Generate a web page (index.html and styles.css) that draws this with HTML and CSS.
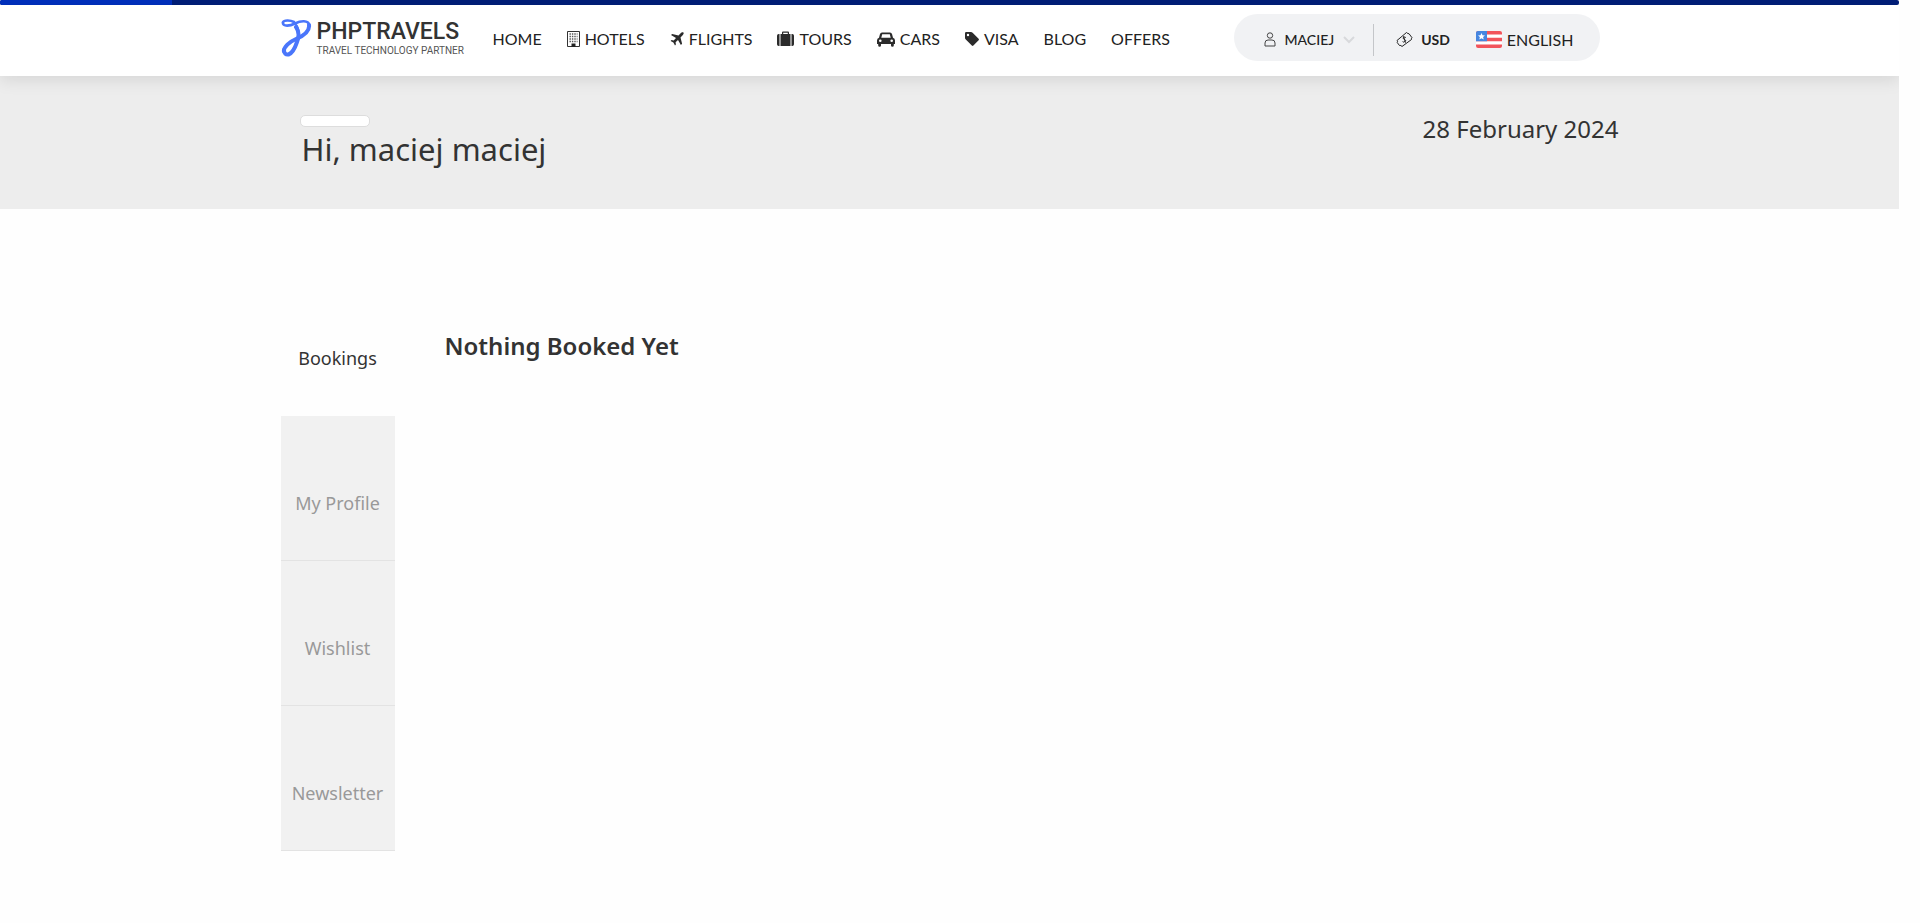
FILE: index.html
```html
<!DOCTYPE html>
<html lang="en">
<head>
<meta charset="utf-8">
<title>PHPTRAVELS - Bookings</title>
<link rel="stylesheet" href="styles.css">
</head>
<body>
<div class="progress"><div class="progress-value"></div></div>
<header class="header">
  <div class="container header-row">
    <a class="logo" href="#">
      <svg class="logo-mark" viewBox="0 0 31 38" fill="none" stroke="#4a76fb" stroke-linecap="round" stroke-linejoin="round">
        <path stroke-width="2.600" d="M13 3C9 1 3 1 1.800 3.500C2 8 9 7 14 4.500C20 1.500 27 1 28.500 6"/>
        <path stroke-width="4" d="M28 6C29 13 22 17 15 20C8 23 3 28 2.800 32"/>
        <path stroke-width="4" d="M15 8C18 12 18 18 16 23C14 29 12 34 7.500 35.500C5 36 3 34.500 3 31"/>
        <path stroke-width="2" d="M13 4.500C16 6 17 9 17 11"/>
      </svg>
      <span class="logo-text"><span class="logo-name">PHPTRAVELS</span><span class="logo-tag">TRAVEL TECHNOLOGY PARTNER</span></span>
    </a>
    <nav class="nav">
      <a href="#">HOME</a>
      <a href="#"><svg width="13" height="16" viewBox="0 0 13 16"><path fill="none" stroke="#333" d="M.5.5h12v15H.5z"/><path stroke="#555" stroke-width="1.4" stroke-dasharray="1.4 1" d="M2.5 3h8M2.5 5.5h8M2.5 8h8M2.5 10.500h8"/><path fill="#222" d="M4.500 12.500h4V16h-4z"/></svg>HOTELS</a>
      <a href="#"><svg width="14" height="14" viewBox="0 0 14 14"><path fill="#2b2b2b" d="M13.400.6c.7.8 0 2-1 3L10.500 5.500l1.600 6.300-1.200 1.200L8 8 5.600 10.300l.3 2.200-.9.900-1.600-2.800L.6 9l.9-.9 2.200.3L6 6 1 3.100l1.200-1.200 6.300 1.600L10.400 1.600c1-1 2.200-1.700 3-1z"/></svg>FLIGHTS</a>
      <a href="#"><svg width="17" height="16" viewBox="0 0 17 16"><path fill="#2b2b2b" fill-rule="evenodd" d="M2.500 3v12h-.8Q0 15 0 13.300V4.700Q0 3 1.700 3zM14.500 3h.8Q17 3 17 4.700v8.600q0 1.700-1.700 1.700h-.8zM3.500 3H5V1.500Q5 .5 6 .5h5q1 0 1 1V3h1.500v12h-10zm2.700 0h4.600V1.700H6.200z"/></svg>TOURS</a>
      <a href="#"><svg width="18" height="15" viewBox="0 0 18 15"><path fill="#2b2b2b" fill-rule="evenodd" d="M5 .5h8q1.500 0 2 1.500l1 3.800Q18 6.500 18 8.500V12h-1.200v1.500q0 1.300-1.400 1.300T14 13.500V12H4v1.500q0 1.300-1.400 1.300t-1.400-1.300V12H0V8.500q0-2 2-2.700L3 2Q3.500.5 5 .5zm.2 1.800L4.300 5.700h9.400l-.9-3.400zM3.300 7.500a1.300 1.300 0 1 0 0 2.600 1.300 1.300 0 0 0 0-2.600zm11.400 0a1.300 1.300 0 1 0 0 2.600 1.300 1.300 0 0 0 0-2.600z"/></svg>CARS</a>
      <a href="#"><svg width="14" height="14" viewBox="0 0 14 14"><path fill="#2b2b2b" fill-rule="evenodd" d="M0 1.200Q0 0 1.200 0H6q.8 0 1.600.7l6 6q.7.8 0 1.600l-5.200 5.300q-.8.700-1.600 0l-6-6Q0 6.800 0 6zM3 1.800a1.200 1.200 0 1 0 0 2.400 1.200 1.200 0 0 0 0-2.400z"/></svg>VISA</a>
      <a href="#">BLOG</a>
      <a href="#">OFFERS</a>
    </nav>
    <div class="tools">
      <button class="account" type="button"><svg width="12" height="15" viewBox="0 0 12 15" fill="none" stroke="#444"><circle cx="6" cy="3.500" r="2.700"/><path d="M1 14v-3Q1 8 4 8h4q3 0 3 3v3z"/></svg>MACIEJ<svg class="chevron" width="12" height="8" viewBox="0 0 12 8"><path d="M1 1l5 5 5-5" fill="none" stroke="#d8d9dc" stroke-width="2"/></svg></button>
      <button class="currency" type="button"><svg width="17" height="17" viewBox="0 0 17 17" fill="none" stroke="#222"><path d="M1 9.500L10.500 1.500Q12 3 13 2.700L16 6.700Q15 8 15.500 8.500L6 15.500Q5 14 3.500 14.500L1.200 11.500Q2 10 1 9.500z"/><path d="M9.800 6.500Q8.300 5.500 7.300 6.500T8.600 8.500 8.800 10.600 6.600 10.600M7.500 5.200l2 6.500"/></svg>USD</button>
      <button class="language" type="button"><svg width="26" height="17" viewBox="0 0 26 17"><defs><clipPath id="flag"><rect width="26" height="17" rx="2"/></clipPath></defs><g clip-path="url(#flag)"><path fill="#fff" d="M0 0h26v17H0z"/><path fill="#f2545b" d="M0 0h26v3.400H0zM0 6.800h26v3.400H0zM0 13.600h26V17H0z"/><path fill="#4686e0" d="M0 0h11v10.200H0z"/><path fill="#fff" d="M5.500 2l1 2.200 2.500.2-1.900 1.600.6 2.500-2.200-1.300-2.200 1.300.6-2.500L2 4.400l2.500-.2z"/></g></svg>ENGLISH</button>
    </div>
  </div>
</header>
<section class="hero">
  <div class="container hero-row">
    <div class="greeting"><div class="avatar"></div><h1>Hi, maciej maciej</h1></div>
    <time class="date" datetime="2024-02-28">28 February 2024</time>
  </div>
</section>
<main class="container main">
  <nav class="tabs">
    <a class="tab active" href="#">Bookings</a>
    <a class="tab" href="#">My Profile</a>
    <a class="tab" href="#">Wishlist</a>
    <a class="tab" href="#">Newsletter</a>
  </nav>
  <section class="content"><h2>Nothing Booked Yet</h2></section>
</main>
</body>
</html>
```
FILE: styles.css
```css
* { box-sizing: border-box; }
body {
  margin: 0 21px 0 0;
  background: #fefefe;
  color: #333;
  font-family: "Noto Sans", sans-serif;
}
a { color: inherit; text-decoration: none; }
button {
  display: flex;
  align-items: center;
  padding: 0;
  border: 0;
  background: none;
  color: #222;
  font: 16px Lato, sans-serif;
}
h1, h2 { margin: 0; }
svg { flex: none; }
.container { max-width: 1338px; margin: 0 auto; }
.progress { height: 5px; border-radius: 2px; background: #001e78; overflow: hidden; }
.progress-value { width: 172px; height: 5px; background: #0030bd; }
.header {
  position: relative;
  background: #fff;
  box-shadow: 0 4px 16px rgba(0, 0, 0, 0.1);
}
.header-row { display: flex; height: 71px; }
.logo { display: flex; align-items: flex-start; gap: 5px; width: 212px; padding-top: 14px; }
.logo-mark { width: 31px; height: 38px; }
.logo-text { display: flex; flex-direction: column; white-space: nowrap; }
.logo-name { font: 500 23px/26px Roboto, sans-serif; }
.logo-tag { font: 10px/12px Roboto, sans-serif; color: #555; }
.nav {
  display: flex;
  gap: 25px;
  height: 68px;
  align-items: center;
  font: 16px/20px Lato, sans-serif;
  color: #222;
}
.nav a { display: flex; align-items: center; gap: 5px; }
.tools {
  display: flex;
  align-items: center;
  width: 366px;
  height: 47px;
  margin: 9px 19px 0 auto;
  padding: 4px 26px 0 30px;
  border-radius: 24px;
  background: #f1f2f4;
}
.account { gap: 9px; height: 32px; padding-right: 18px; border-right: 1px solid #c4c6c9; font-size: 14px; font-weight: 500; }
.currency { gap: 8px; margin-left: 22px; font-size: 14px; font-weight: 700; }
.language { gap: 5px; margin-left: auto; }
.hero { height: 133px; background: #ededed; }
.hero-row { display: flex; justify-content: space-between; padding-top: 39px; }
.greeting { padding-left: 19px; }
.avatar { width: 70px; height: 12px; border: 1px solid #ddd; border-radius: 5px; background: #fff; }
h1 { padding-left: 2px; font-size: 31px; line-height: 44px; font-weight: 400; }
.date { font-size: 24px; line-height: 28px; }
.main { display: flex; gap: 50px; padding-top: 62px; }
.tabs { width: 114px; }
.tab {
  display: flex;
  align-items: flex-end;
  justify-content: center;
  height: 145px;
  padding-bottom: 45px;
  border-bottom: 1px solid #e3e3e3;
  background: #f1f1f1;
  color: #999;
  font-size: 18px;
  line-height: 24px;
}
.tab.active { border-color: transparent; background: none; color: #333; }
.content { flex: 1; padding-top: 59px; }
h2 { font-size: 24px; line-height: 32px; font-weight: 600; }
```
